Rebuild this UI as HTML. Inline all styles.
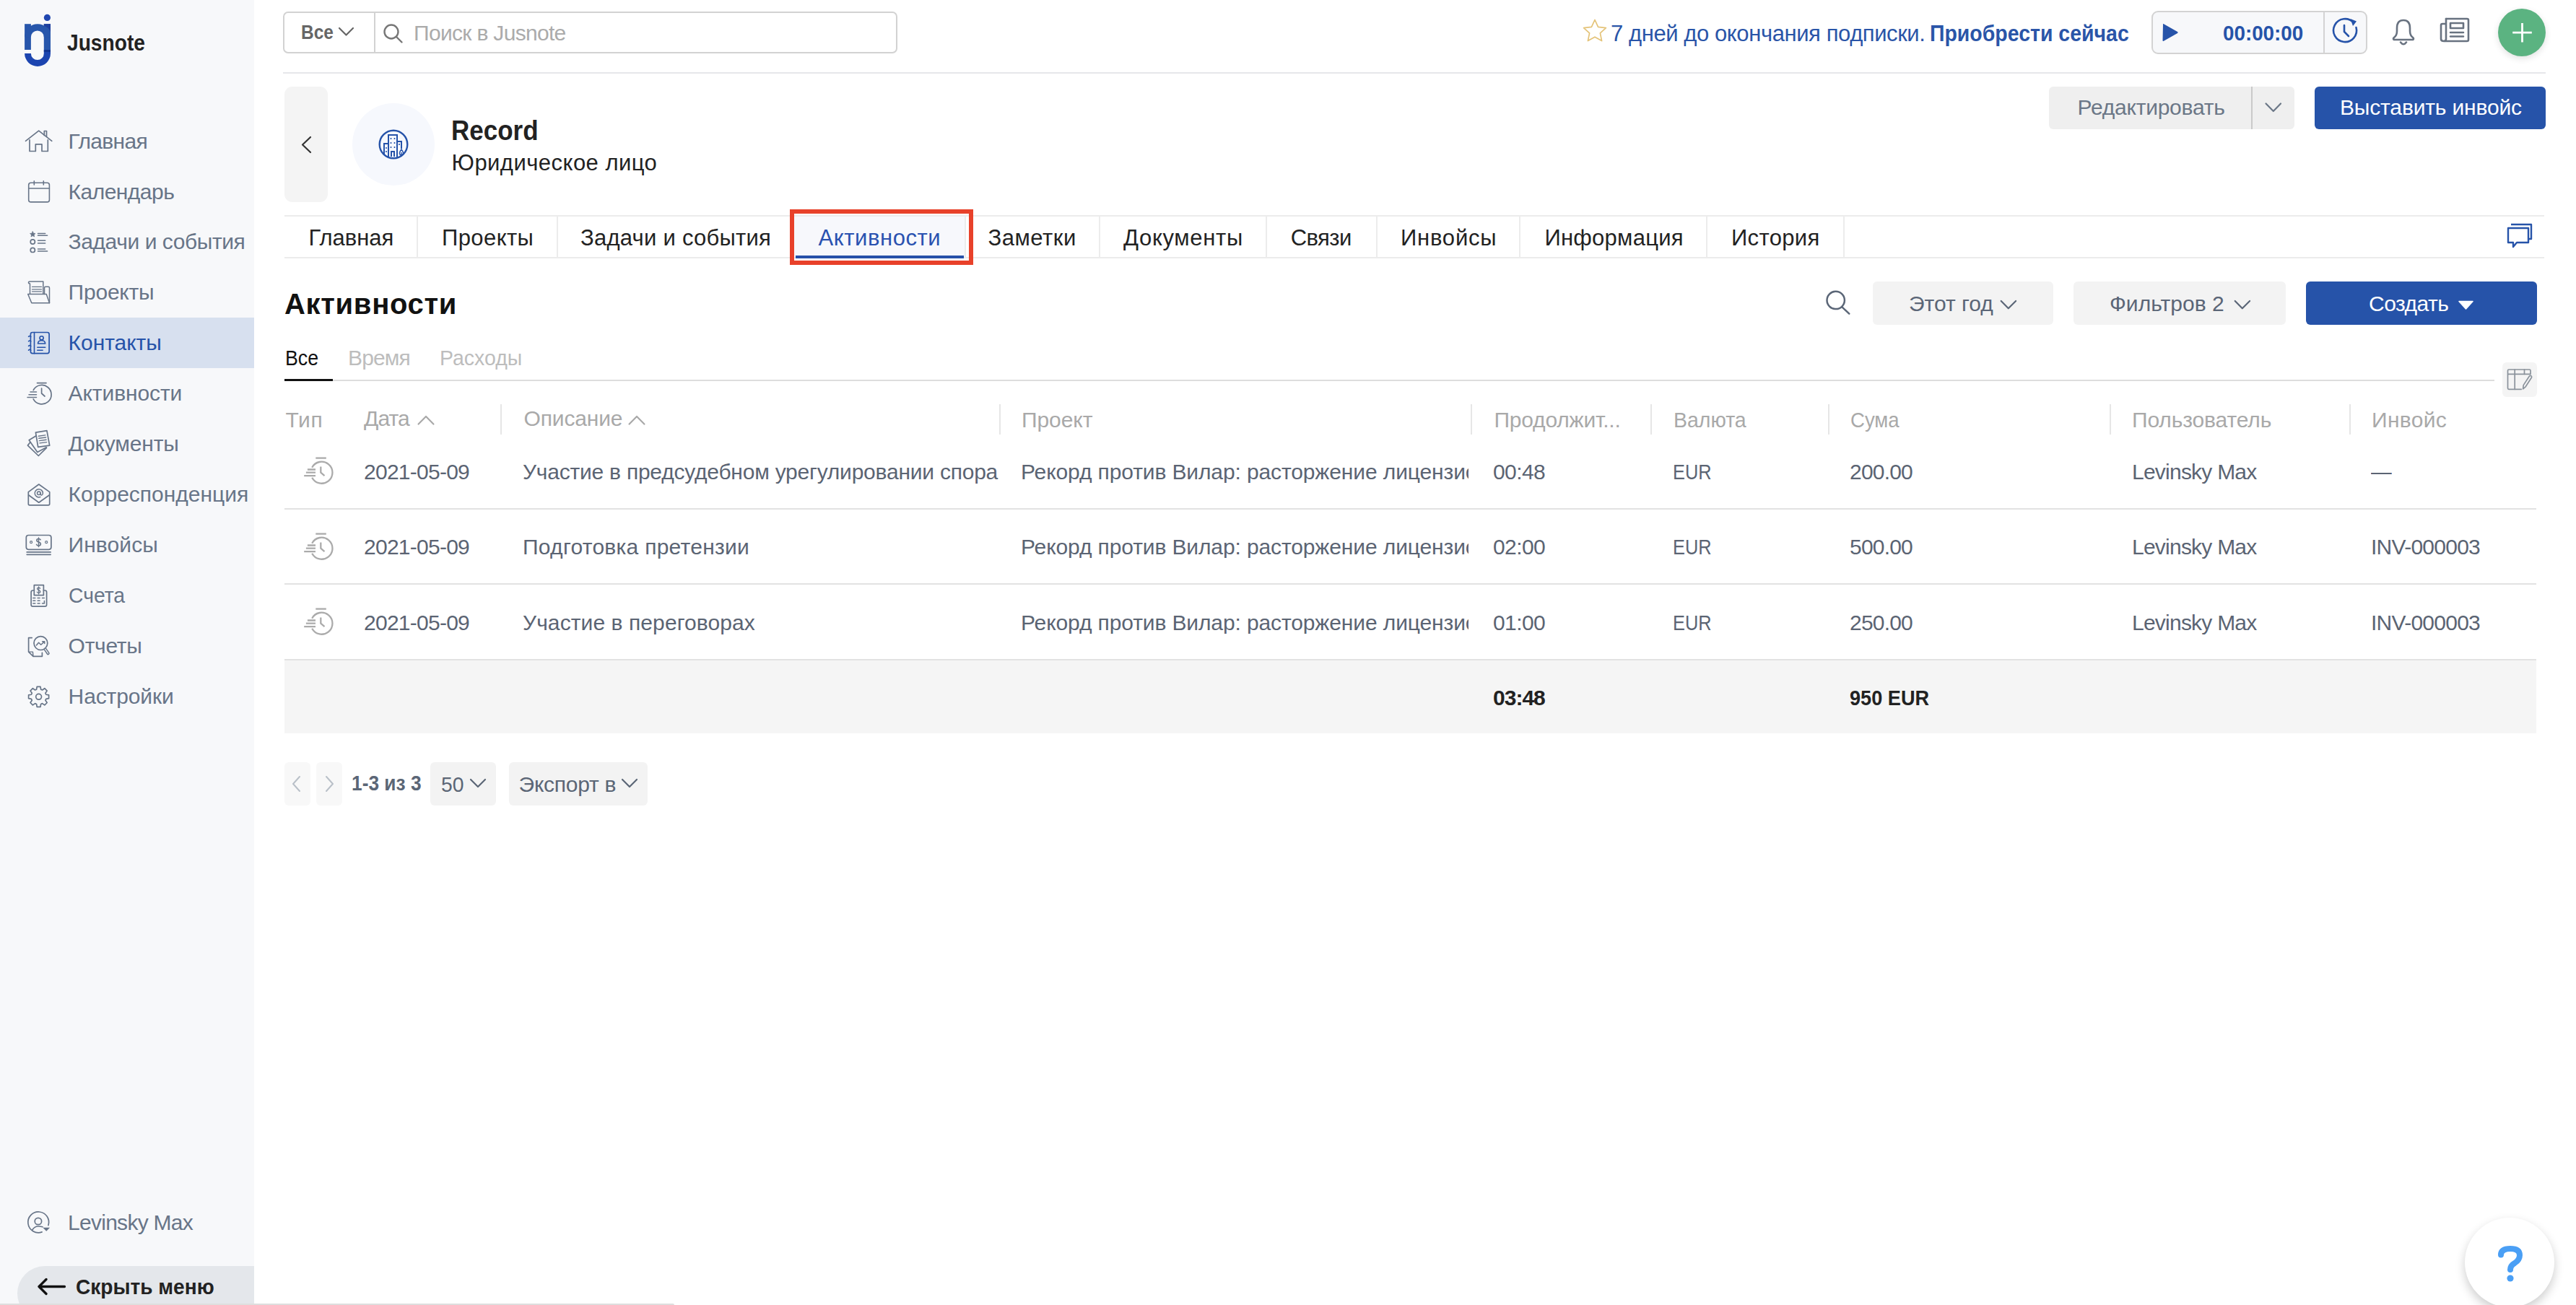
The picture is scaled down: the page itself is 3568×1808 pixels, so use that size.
<!DOCTYPE html>
<html><head><meta charset="utf-8"><style>
html,body{margin:0;padding:0;}
body{width:3568px;height:1808px;position:relative;overflow:hidden;background:#fff;font-family:"Liberation Sans",sans-serif;}
.t{position:absolute;white-space:nowrap;}
</style></head><body>
<div style="position:absolute;left:0px;top:0px;width:352px;height:1808px;background:#f7f8fa;"></div>
<svg style="position:absolute;left:30px;top:16px;" width="46" height="80" viewBox="0 0 46 80" fill="none">
<defs><clipPath id="lgT"><rect x="0" y="0" width="46" height="53"/></clipPath><clipPath id="lgB"><rect x="0" y="53" width="46" height="30"/></clipPath></defs>
<g clip-path="url(#lgT)" fill="#2756ab"><path fill-rule="evenodd" d="M4.1 35.15 A17.95 17.95 0 0 1 40 35.15 V57.95 A17.95 17.95 0 0 1 4.1 57.95 Z M12.9 35.35 A8.95 8.95 0 0 1 30.8 35.35 V58.15 A8.95 8.95 0 0 1 12.9 58.15 Z"/><rect x="4.1" y="17.2" width="8.8" height="18"/><rect x="30.8" y="17.2" width="9.2" height="18"/></g>
<g clip-path="url(#lgB)" fill="#1c45b0"><path fill-rule="evenodd" d="M4.1 35.15 A17.95 17.95 0 0 1 40 35.15 V57.95 A17.95 17.95 0 0 1 4.1 57.95 Z M12.9 35.35 A8.95 8.95 0 0 1 30.8 35.35 V58.15 A8.95 8.95 0 0 1 12.9 58.15 Z"/></g>
<rect x="30.8" y="53" width="9.2" height="3" fill="#0f2f8a" opacity="0.8"/>
<path d="M30.8 17.2 H40 V28 Q37 21 30.8 20 Z" fill="#1d3f9e"/>
<rect x="2" y="53" width="12" height="5" fill="#f7f8fa"/>
<circle cx="35.4" cy="8.4" r="4.6" fill="#2047b0"/>
</svg>
<div style="position:absolute;left:0px;top:440px;width:352px;height:70px;background:#d7e0ef;"></div>
<svg style="position:absolute;left:0px;top:0px;" width="352" height="1808" viewBox="0 0 352 1808" fill="none">
<g stroke="#687588" stroke-width="1.7" fill="none" stroke-linecap="round" stroke-linejoin="round">
<path d="M35.5 195.3 L53.7 181.2 L71.8 195.3"/>
<path d="M41 193.9 V209.5 H49.3 V199.9 H58 V209.5 H66.3 V193.9"/>
<path d="M61.3 187.5 V181.5 H64.5 V188.9"/>
<rect x="39.7" y="253.2" width="28.7" height="26.7" rx="3" stroke-width="1.6"/>
<path d="M39.7 261 H68.4 M47.3 250.9 V256 M60.3 250.9 V256" stroke-width="1.6"/>
<path d="M45.3 320.8 L46.4 323.2 L49 323.5 L47 325.3 L47.6 327.9 L45.3 326.6 L43 327.9 L43.6 325.3 L41.6 323.5 L44.2 323.2 Z" fill="#687588" stroke-width="0.8"/>
<circle cx="45.3" cy="335" r="3.1"/><circle cx="45.3" cy="346.4" r="3.1"/>
<path d="M52.5 323.4 H62.7 M52.5 326.3 H65.6 M52.5 333.3 H62.7 M52.5 336.9 H62.7 M52.5 344.9 H62.7 M52.5 348.1 H65.6" stroke-width="1.5"/>
<path d="M41.5 407 V393 Q39.5 393 39.5 391.5 Q39.5 390 41.5 390 H59.8 V407" stroke-width="1.5"/>
<path d="M44.5 397.3 H57.6 M44.5 400.9 H57.6 M44.5 403.8 H57.6" stroke-width="1.3"/>
<path d="M61.5 407.5 V399 Q61.5 397.3 63 397.3 H67 Q68.5 397.3 68.5 399 V419.8" stroke-width="1.5"/>
<path d="M38.7 407.5 H64.2 L68.5 419.8 H43.8 Z" stroke-width="1.5"/>
</g>
<g stroke="#2653a9" stroke-width="1.7" fill="none" stroke-linecap="round" stroke-linejoin="round">
<rect x="42.4" y="460.5" width="25.7" height="29.1" rx="2.5" stroke-width="1.7"/>
<path d="M47.5 460.5 V489.6" stroke-width="1.6"/>
<path d="M39.5 466.4 Q41 464.5 42.8 466.4 M39.5 472.9 Q41 471 42.8 472.9 M39.5 479.5 Q41 477.6 42.8 479.5 M39.5 485.3 Q41 483.4 42.8 485.3" stroke-width="1.5"/>
<circle cx="57.6" cy="468.3" r="2.6" stroke-width="1.6"/>
<path d="M52.5 476 Q52.8 471.8 57.6 471.8 Q62.4 471.8 62.7 476 Z" stroke-width="1.6"/>
<path d="M51.8 481.3 H62.7 M51.8 485.3 H59.1" stroke-width="1.6"/>
</g>
<g stroke="#687588" stroke-width="1.7" fill="none" stroke-linecap="round" stroke-linejoin="round">
<path d="M46.2 540.6 A13.2 13.2 0 1 1 46.2 552.8"/>
<path d="M57.6 538 V545 L62 549"/>
<path d="M51.5 530.6 H64"/>
<path d="M42 543 H50.5 M40 546.7 H50.5 M38 550.6 H50.5" stroke-width="1.5"/>
</g>
<g stroke="#687588" stroke-width="1.7" fill="none" stroke-linecap="round" stroke-linejoin="round">
<path d="M49.4 599.2 L64.9 596.7 L68.7 617.1 L52.7 619.3 Z"/>
<path d="M53.3 604.2 L62.9 602.9 M53.8 607.3 L63.6 606 M54.4 610.6 L64.1 609.3 M55 613.9 L64.7 612.6" stroke-width="1.4"/>
<path d="M49.7 604 L40.2 609.7 L51.8 626.4 L64.2 619.8"/>
<path d="M41.8 612.8 L38.4 617.1 L53.3 631.5 L64.5 620.3"/>
</g>
<g stroke="#687588" stroke-width="1.7" fill="none" stroke-linecap="round" stroke-linejoin="round">
<path d="M39.3 681.6 L53.8 671 L68.7 681.6 V698 Q68.7 699.8 67 699.8 H41 Q39.3 699.8 39.3 698 Z"/>
<path d="M39.8 686 L53.8 696.2 L68.2 686"/>
<circle cx="53.8" cy="683.3" r="2.3" stroke-width="1.5"/>
<path d="M56.1 683.3 V684.6 Q56.3 686.2 57.8 685.9 Q59.4 685.5 59.4 683.3 A5.6 5.6 0 1 0 55.8 688.5" stroke-width="1.5"/>
</g>
<g stroke="#687588" stroke-width="1.7" fill="none" stroke-linecap="round" stroke-linejoin="round">
<rect x="36.3" y="741.5" width="34.6" height="19.8" rx="3.2"/>
<path d="M37.2 764.9 H70.1 M37.2 768.3 H70.1"/>
<circle cx="43.1" cy="751.2" r="1.5" stroke-width="1.2"/><circle cx="64.2" cy="751.2" r="1.5" stroke-width="1.2"/>
<path d="M56.2 747.8 Q55.4 746.4 53.5 746.4 Q50.8 746.4 50.8 748.5 Q50.8 750.4 53.5 751 Q56.4 751.6 56.4 753.8 Q56.4 756 53.5 756 Q51.3 756 50.5 754.4 M53.5 745 V757.5" stroke-width="1.5"/>
</g>
<g stroke="#687588" stroke-width="1.7" fill="none" stroke-linecap="round" stroke-linejoin="round">
<path d="M47.3 818 H45.5 Q43.1 818 43.1 820.4 V837.8 Q43.1 840.2 45.5 840.2 H62.2 Q64.6 840.2 64.6 837.8 V820.4 Q64.6 818 62.2 818 H60.4"/>
<rect x="47.3" y="810.7" width="13.1" height="13.9"/>
<path d="M55.6 815.2 Q55 814.2 53.6 814.2 Q51.6 814.2 51.6 815.8 Q51.6 817.2 53.6 817.7 Q55.8 818.2 55.8 819.8 Q55.8 821.4 53.6 821.4 Q52 821.4 51.4 820.2 M53.6 813 V822.9" stroke-width="1.3"/>
<path d="M45.8 828.4 H48.8 M52.1 828.4 H55.1 M58.5 828.4 H61.4 M45.8 832.2 H48.8 M52.1 832.2 H55.1 M45.8 836 H48.8 M52.1 836 H55.1 M58.5 836 H61.4 V832.6" stroke-width="1.5"/>
</g>
<g stroke="#687588" stroke-width="1.7" fill="none" stroke-linecap="round" stroke-linejoin="round">
<path d="M44.2 883.6 H39.6 V903.1 L46 909.3 H58.4 V904.4"/>
<path d="M39.6 903.1 H45.4 L46 909.3" stroke-width="1.4"/>
<circle cx="56.4" cy="891.1" r="9.4"/>
<path d="M62.6 899.4 L66.6 905.2" stroke-width="4.2"/>
<path d="M62.6 899.4 L66.6 905.2" stroke="#f7f8fa" stroke-width="1.2"/>
<path d="M50.4 894 L53.6 890.2 L56.7 893.3 L61.6 888.9 M58.6 888.7 H61.7 V891.5" stroke-width="1.5"/>
</g>
<g stroke="#687588" stroke-width="1.7" fill="none" stroke-linecap="round" stroke-linejoin="round">
<path d="M50.57 955.14 L51.20 951.30 L56.00 951.30 L56.63 955.14 L58.64 955.97 L61.80 953.71 L65.19 957.10 L62.93 960.26 L63.76 962.27 L67.60 962.90 L67.60 967.70 L63.76 968.33 L62.93 970.34 L65.19 973.50 L61.80 976.89 L58.64 974.63 L56.63 975.46 L56.00 979.30 L51.20 979.30 L50.57 975.46 L48.56 974.63 L45.40 976.89 L42.01 973.50 L44.27 970.34 L43.44 968.33 L39.60 967.70 L39.60 962.90 L43.44 962.27 L44.27 960.26 L42.01 957.10 L45.40 953.71 L48.56 955.97 Z"/>
<circle cx="53.6" cy="965.3" r="3.9"/>
</g>
<g stroke="#687588" stroke-width="1.7" fill="none" stroke-linecap="round" stroke-linejoin="round" stroke-width="1.7">
<path d="M66.97 1697.6 A14.4 14.4 0 1 0 58.1 1706.9"/>
<circle cx="52.9" cy="1692" r="4.7"/>
<path d="M44.6 1704.4 Q47.5 1699 53 1699 Q56.5 1699 59 1699.8"/>
</g>
<path d="M59.3 1700.7 H69.1 L64.2 1705.8 Z" fill="#687588"/>
</svg>
<div style="position:absolute;left:24px;top:1754px;width:328px;height:76px;background:#e4e7eb;border-radius:38px 0 0 38px;"></div>
<svg style="position:absolute;left:40px;top:1760px;" width="60" height="40" viewBox="40 1760 60 40" fill="none"><path d="M54 1782.5 H89.5 M64 1772.5 L54 1782.5 L64 1792.5" stroke="#111" stroke-width="3.3" fill="none" stroke-linecap="round" stroke-linejoin="round"/></svg>
<div style="position:absolute;left:0px;top:1806px;width:934px;height:2px;background:#dedede;border-radius:0 2px 0 0;"></div>
<div style="position:absolute;left:392px;top:16px;width:851px;height:58px;box-sizing:border-box;border:2px solid #d2d2d2;border-radius:7px;"></div>
<div style="position:absolute;left:518px;top:18px;width:2px;height:54px;background:#d2d2d2;"></div>
<svg style="position:absolute;left:466px;top:34px;" width="28" height="20" viewBox="0 0 28 20" fill="none"><path d="M4 5 L13.5 14.5 L23 5" stroke="#666" stroke-width="2.2" fill="none" stroke-linecap="round" stroke-linejoin="round"/></svg>
<svg style="position:absolute;left:528px;top:30px;" width="34" height="32" viewBox="0 0 34 32" fill="none"><g stroke="#777" stroke-width="2.4" fill="none" stroke-linecap="round"><circle cx="14" cy="14" r="9.5"/><path d="M21 21 L28.5 28.5"/></g></svg>
<div style="position:absolute;left:392px;top:100px;width:3134px;height:2px;background:#e6e7ea;"></div>
<svg style="position:absolute;left:2190px;top:24px;" width="38" height="38" viewBox="0 0 38 38" fill="none"><path d="M19 3.5 L23.6 13.4 L34.4 14.6 L26.4 21.9 L28.6 32.6 L19 27.2 L9.4 32.6 L11.6 21.9 L3.6 14.6 L14.4 13.4 Z" stroke="#e4c378" stroke-width="1.7" fill="none" stroke-linejoin="round"/></svg>
<div style="position:absolute;left:2980px;top:15px;width:299px;height:60px;box-sizing:border-box;border:2px solid #d3d3d3;border-radius:9px;background:#f7f8fa;"></div>
<div style="position:absolute;left:3218px;top:17px;width:2px;height:56px;background:#d3d3d3;"></div>
<svg style="position:absolute;left:2992px;top:30px;" width="28" height="30" viewBox="0 0 28 30" fill="none"><path d="M4 4 Q3.5 2.5 5 3.2 L24 14 Q25.5 15 24 16 L5 26.8 Q3.5 27.5 3.5 26 Z" fill="#2653a9"/></svg>
<svg style="position:absolute;left:3228px;top:22px;" width="42" height="42" viewBox="0 0 42 42" fill="none"><g stroke="#2653a9" stroke-width="2.6" fill="none" stroke-linecap="round"><path d="M32 9.5 A16 16 0 1 0 35.5 16"/><path d="M19 13 V22 L25 28"/></g><path d="M27.5 4 L36 7.5 L31 14 Z" fill="#2653a9"/></svg>
<svg style="position:absolute;left:3306px;top:22px;" width="46" height="46" viewBox="0 0 46 46" fill="none"><g stroke="#687280" stroke-width="2.6" fill="none" stroke-linecap="round" stroke-linejoin="round"><path d="M10 30 Q14 27 14 21 V17 Q14 6 23 6 Q32 6 32 17 V21 Q32 27 36 30 Q38 32 36 33 H10 Q8 32 10 30 Z"/><path d="M19 36.5 Q23 42 27 36.5"/></g></svg>
<svg style="position:absolute;left:3374px;top:20px;" width="50" height="44" viewBox="0 0 50 44" fill="none"><g stroke="#687280" stroke-width="2.6" fill="none" stroke-linejoin="round" stroke-linecap="round"><path d="M14 6 H43 Q45 6 45 8 V35 Q45 37 43 37 H12"/><path d="M14 6 V34 Q14 37 11 37 Q7 37 7 34 V15 Q7 13 9 13 H14"/><rect x="20" y="12" width="18" height="7"/><path d="M20 25 H38 M20 30.5 H38"/></g></svg>
<div style="position:absolute;left:3460px;top:12px;width:66px;height:66px;border-radius:50%;background:#5bb381;box-shadow:0 3px 10px rgba(0,0,0,0.12);"></div>
<svg style="position:absolute;left:3476px;top:28px;" width="34" height="34" viewBox="0 0 34 34" fill="none"><path d="M17.5 4 V30.5 M4.2 17.2 H30.8" stroke="#fff" stroke-width="2.8" stroke-linecap="butt"/></svg>
<div style="position:absolute;left:394px;top:120px;width:60px;height:160px;background:#f4f4f4;border-radius:11px;"></div>
<svg style="position:absolute;left:412px;top:186px;" width="24" height="30" viewBox="0 0 24 30" fill="none"><path d="M18 4 L7 14.5 L18 25" stroke="#333" stroke-width="2.2" fill="none" stroke-linecap="round" stroke-linejoin="round"/></svg>
<div style="position:absolute;left:488px;top:143px;width:114px;height:114px;border-radius:50%;background:#f6f8fd;"></div>
<svg style="position:absolute;left:522px;top:177px;" width="46" height="46" viewBox="0 0 46 46" fill="none"><g stroke="#2653a9" stroke-width="2" fill="none"><circle cx="23" cy="23" r="19.3" stroke-width="2.4"/><path d="M16 41 V10 H28 V41"/><path d="M16 22 H10 V38"/><path d="M28 19 H34 V29"/><path d="M20 40 V33 H24 V40"/><path d="M19.5 14 V16 M24.5 14 V16 M19.5 20 V22 M24.5 20 V22 M19.5 26 V28 M24.5 26 V28 M13 27 V29 M13 32 V34 M31 22 V24" stroke-width="1.6"/><path d="M34 40 V34 M34 30 Q37 34 36.5 36 Q36 38 34 38 Q32 38 31.5 36 Q31 34 34 30 Z" stroke-width="1.4"/></g></svg>
<div style="position:absolute;left:2838px;top:120px;width:340px;height:59px;background:#efefef;border-radius:6px;"></div>
<div style="position:absolute;left:3118px;top:120px;width:2px;height:59px;background:#c9c9c9;"></div>
<svg style="position:absolute;left:3134px;top:138px;" width="30" height="22" viewBox="0 0 30 22" fill="none"><path d="M4.5 5.5 L14.8 16 L25 5.5" stroke="#6b7787" stroke-width="2.2" fill="none" stroke-linecap="round" stroke-linejoin="round"/></svg>
<div style="position:absolute;left:3206px;top:120px;width:320px;height:59px;background:#2653a9;border-radius:6px;"></div>
<div style="position:absolute;left:394px;top:298px;width:3130px;height:2px;background:#ececec;"></div>
<div style="position:absolute;left:394px;top:356px;width:3130px;height:2px;background:#ececec;"></div>
<div style="position:absolute;left:1100px;top:300px;width:237px;height:56px;background:#f7f8fc;"></div>
<div style="position:absolute;left:577px;top:300px;width:2px;height:56px;background:#ececec;"></div>
<div style="position:absolute;left:771px;top:300px;width:2px;height:56px;background:#ececec;"></div>
<div style="position:absolute;left:1097px;top:300px;width:2px;height:56px;background:#ececec;"></div>
<div style="position:absolute;left:1336px;top:300px;width:2px;height:56px;background:#ececec;"></div>
<div style="position:absolute;left:1522px;top:300px;width:2px;height:56px;background:#ececec;"></div>
<div style="position:absolute;left:1753px;top:300px;width:2px;height:56px;background:#ececec;"></div>
<div style="position:absolute;left:1905.5px;top:300px;width:2.0px;height:56px;background:#ececec;"></div>
<div style="position:absolute;left:2103.5px;top:300px;width:2.0px;height:56px;background:#ececec;"></div>
<div style="position:absolute;left:2362.7px;top:300px;width:2.0px;height:56px;background:#ececec;"></div>
<div style="position:absolute;left:2553px;top:300px;width:2px;height:56px;background:#ececec;"></div>
<div style="position:absolute;left:1102px;top:354px;width:233px;height:4px;background:#2650a8;"></div>
<div style="position:absolute;left:1094px;top:290px;width:254px;height:77px;box-sizing:border-box;border:6px solid #e8412a;"></div>
<svg style="position:absolute;left:3468px;top:306px;" width="44" height="42" viewBox="0 0 44 42" fill="none"><g stroke="#2653a9" stroke-width="2.4" fill="none" stroke-linejoin="round"><path d="M10 5 H38 V25 H35"/><path d="M6 10 H34 V30 H18 L13 36 V30 H6 Z"/></g></svg>
<svg style="position:absolute;left:2500px;top:380px;" width="80" height="80" viewBox="2500 380 80 80" fill="none"><g stroke="#5b6677" stroke-width="2.5" fill="none" stroke-linecap="round"><circle cx="2542.7" cy="415.9" r="12.2"/><path d="M2551.4 425.3 L2561.3 434.6"/></g></svg>
<div style="position:absolute;left:2594px;top:390px;width:250px;height:60px;background:#f3f3f3;border-radius:6px;"></div>
<svg style="position:absolute;left:2766px;top:412px;" width="32" height="22" viewBox="0 0 32 22" fill="none"><path d="M5.7 5 L15.8 15.3 L26.1 5" stroke="#5b6677" stroke-width="2.2" fill="none" stroke-linecap="round" stroke-linejoin="round"/></svg>
<div style="position:absolute;left:2872px;top:390px;width:294px;height:60px;background:#f3f3f3;border-radius:6px;"></div>
<svg style="position:absolute;left:3090px;top:412px;" width="32" height="22" viewBox="0 0 32 22" fill="none"><path d="M5.7 5 L15.8 15.3 L26.1 5" stroke="#5b6677" stroke-width="2.2" fill="none" stroke-linecap="round" stroke-linejoin="round"/></svg>
<div style="position:absolute;left:3194px;top:390px;width:320px;height:60px;background:#2653a9;border-radius:6px;"></div>
<svg style="position:absolute;left:3400px;top:412px;" width="32" height="22" viewBox="0 0 32 22" fill="none"><path d="M6 5.5 H25 L15.5 16 Z" fill="#fff" stroke="#fff" stroke-width="1.6" stroke-linejoin="round"/></svg>
<div style="position:absolute;left:394px;top:526px;width:3061px;height:2px;background:#dddddd;"></div>
<div style="position:absolute;left:394px;top:525px;width:67px;height:3px;background:#111;"></div>
<div style="position:absolute;left:3466px;top:502px;width:48px;height:48px;background:#f4f4f4;border-radius:6px;"></div>
<svg style="position:absolute;left:3460px;top:500px;" width="60" height="56" viewBox="3460 500 60 56" fill="none"><g stroke="#8a929b" stroke-width="1.7" fill="none" stroke-linejoin="round" stroke-linecap="round"><path d="M3492.3 539.3 H3475 Q3473.5 539.3 3473.5 537.8 V513.5 Q3473.5 512 3475 512 H3503.5 Q3505 512 3505 513.5 V518.3 H3473.5"/><path d="M3483.2 512 V539.3 M3496.5 512 V518.3"/><path d="M3494.6 538.8 L3495.2 533.6 L3503.3 521.3 Q3504.5 519.8 3506 520.8 Q3507.2 521.8 3506.3 523.3 L3498.2 535.8 Z"/></g></svg>
<svg style="position:absolute;left:576px;top:572px;" width="30" height="20" viewBox="0 0 30 20" fill="none"><path d="M3.6 15.6 L14 5 L24.4 15.6" stroke="#a9a9a9" stroke-width="2.2" fill="none" stroke-linecap="round" stroke-linejoin="round"/></svg>
<svg style="position:absolute;left:868px;top:572px;" width="30" height="20" viewBox="0 0 30 20" fill="none"><path d="M3.6 15.6 L14 5 L24.4 15.6" stroke="#a9a9a9" stroke-width="2.2" fill="none" stroke-linecap="round" stroke-linejoin="round"/></svg>
<div style="position:absolute;left:693px;top:560px;width:2px;height:42px;background:#e6e6e6;"></div>
<div style="position:absolute;left:1383.5px;top:560px;width:2.0px;height:42px;background:#e6e6e6;"></div>
<div style="position:absolute;left:2037px;top:560px;width:2px;height:42px;background:#e6e6e6;"></div>
<div style="position:absolute;left:2286px;top:560px;width:2px;height:42px;background:#e6e6e6;"></div>
<div style="position:absolute;left:2531.5px;top:560px;width:2.0px;height:42px;background:#e6e6e6;"></div>
<div style="position:absolute;left:2921.5px;top:560px;width:2.0px;height:42px;background:#e6e6e6;"></div>
<div style="position:absolute;left:3253.5px;top:560px;width:2.0px;height:42px;background:#e6e6e6;"></div>
<svg style="position:absolute;left:420px;top:630px;" width="44" height="44" viewBox="0 0 44 44" fill="none"><g stroke="#ababab" stroke-width="2.3" fill="none" stroke-linecap="butt" stroke-linejoin="round"><path d="M12.2 17.7 A15 15 0 1 1 12.2 31.7"/><path d="M24.3 16.6 V24.7 L29.5 29.2"/><path d="M17.3 4.6 H31.8"/><path d="M5.9 20.5 H17 M3.9 24.7 H17 M1.2 29.2 H17"/></g></svg>
<svg style="position:absolute;left:420px;top:734.5px;" width="44" height="44" viewBox="0 0 44 44" fill="none"><g stroke="#ababab" stroke-width="2.3" fill="none" stroke-linecap="butt" stroke-linejoin="round"><path d="M12.2 17.7 A15 15 0 1 1 12.2 31.7"/><path d="M24.3 16.6 V24.7 L29.5 29.2"/><path d="M17.3 4.6 H31.8"/><path d="M5.9 20.5 H17 M3.9 24.7 H17 M1.2 29.2 H17"/></g></svg>
<svg style="position:absolute;left:420px;top:839px;" width="44" height="44" viewBox="0 0 44 44" fill="none"><g stroke="#ababab" stroke-width="2.3" fill="none" stroke-linecap="butt" stroke-linejoin="round"><path d="M12.2 17.7 A15 15 0 1 1 12.2 31.7"/><path d="M24.3 16.6 V24.7 L29.5 29.2"/><path d="M17.3 4.6 H31.8"/><path d="M5.9 20.5 H17 M3.9 24.7 H17 M1.2 29.2 H17"/></g></svg>
<div style="position:absolute;left:394px;top:703.5px;width:3119px;height:2.0px;background:#e2e2e2;"></div>
<div style="position:absolute;left:394px;top:808px;width:3119px;height:2px;background:#e2e2e2;"></div>
<div style="position:absolute;left:394px;top:912.5px;width:3119px;height:2.0px;background:#e2e2e2;"></div>
<div style="position:absolute;left:394px;top:914.5px;width:3119px;height:101.5px;background:#f5f5f5;"></div>
<div style="position:absolute;left:394px;top:1056px;width:36px;height:60px;background:#f8f8f8;border-radius:6px;"></div>
<div style="position:absolute;left:438px;top:1056px;width:36px;height:60px;background:#f8f8f8;border-radius:6px;"></div>
<svg style="position:absolute;left:400px;top:1072px;" width="24" height="28" viewBox="0 0 24 28" fill="none"><path d="M15 4 L6 14 L15 24" stroke="#b9c0c8" stroke-width="2" fill="none" stroke-linecap="round" stroke-linejoin="round"/></svg>
<svg style="position:absolute;left:444px;top:1072px;" width="24" height="28" viewBox="0 0 24 28" fill="none"><path d="M8 4 L17 14 L8 24" stroke="#b9c0c8" stroke-width="2" fill="none" stroke-linecap="round" stroke-linejoin="round"/></svg>
<div style="position:absolute;left:596px;top:1056px;width:91px;height:60px;background:#f3f3f3;border-radius:6px;"></div>
<svg style="position:absolute;left:647px;top:1076px;" width="30" height="20" viewBox="0 0 30 20" fill="none"><path d="M5 4 L15 14 L25 4" stroke="#5b6676" stroke-width="2.2" fill="none" stroke-linecap="round" stroke-linejoin="round"/></svg>
<div style="position:absolute;left:705px;top:1056px;width:192px;height:60px;background:#f3f3f3;border-radius:6px;"></div>
<svg style="position:absolute;left:857px;top:1076px;" width="30" height="20" viewBox="0 0 30 20" fill="none"><path d="M5 4 L15 14 L25 4" stroke="#5b6676" stroke-width="2.2" fill="none" stroke-linecap="round" stroke-linejoin="round"/></svg>
<div style="position:absolute;left:3414px;top:1687px;width:124px;height:124px;border-radius:50%;background:#fff;box-shadow:0 6px 14px rgba(0,0,0,0.2);"></div>
<svg style="position:absolute;left:3450px;top:1720px;" width="54" height="62" viewBox="0 0 54 62" fill="none"><path d="M14 18.5 Q14 10 27 10 Q40 10 40 19 Q40 25.5 33 30 Q27 33.5 27 39" stroke="#4a9ff5" stroke-width="8" fill="none" stroke-linecap="round" stroke-linejoin="round"/><circle cx="27" cy="51" r="4.6" fill="#4a9ff5"/></svg>
<span id="t0" class="t" style="left:92.7px;top:43.8px;font-size:31px;line-height:31px;color:#222;font-weight:700;letter-spacing:0px;transform:scaleX(0.9086);transform-origin:0 0;">Jusnote</span>
<span id="t1" class="t" style="left:94.6px;top:180.6px;font-size:30px;line-height:30px;color:#687588;font-weight:400;letter-spacing:-0.665px;">Главная</span>
<span id="t2" class="t" style="left:94.6px;top:250.5px;font-size:30px;line-height:30px;color:#687588;font-weight:400;letter-spacing:-0.528px;">Календарь</span>
<span id="t3" class="t" style="left:94.6px;top:320.4px;font-size:30px;line-height:30px;color:#687588;font-weight:400;letter-spacing:-0.431px;">Задачи и события</span>
<span id="t4" class="t" style="left:94.6px;top:390.3px;font-size:30px;line-height:30px;color:#687588;font-weight:400;letter-spacing:-0.215px;">Проекты</span>
<span id="t5" class="t" style="left:94.6px;top:460.2px;font-size:30px;line-height:30px;color:#2653a9;font-weight:400;letter-spacing:-0.056px;">Контакты</span>
<span id="t6" class="t" style="left:94.6px;top:530.1px;font-size:30px;line-height:30px;color:#687588;font-weight:400;letter-spacing:-0.097px;">Активности</span>
<span id="t7" class="t" style="left:94.6px;top:600.0px;font-size:30px;line-height:30px;color:#687588;font-weight:400;letter-spacing:-0.182px;">Документы</span>
<span id="t8" class="t" style="left:94.6px;top:669.9px;font-size:30px;line-height:30px;color:#687588;font-weight:400;letter-spacing:0.003px;">Корреспонденция</span>
<span id="t9" class="t" style="left:94.6px;top:739.8px;font-size:30px;line-height:30px;color:#687588;font-weight:400;letter-spacing:0.075px;">Инвойсы</span>
<span id="t10" class="t" style="left:94.6px;top:809.7px;font-size:30px;line-height:30px;color:#687588;font-weight:400;letter-spacing:0px;transform:scaleX(0.9440);transform-origin:0 0;">Счета</span>
<span id="t11" class="t" style="left:94.6px;top:879.6px;font-size:30px;line-height:30px;color:#687588;font-weight:400;letter-spacing:-0.301px;">Отчеты</span>
<span id="t12" class="t" style="left:94.6px;top:949.5px;font-size:30px;line-height:30px;color:#687588;font-weight:400;letter-spacing:-0.114px;">Настройки</span>
<span id="t13" class="t" style="left:94.0px;top:1678.6px;font-size:30px;line-height:30px;color:#687588;font-weight:400;letter-spacing:-0.721px;">Levinsky Max</span>
<span id="t14" class="t" style="left:104.8px;top:1768.2px;font-size:30px;line-height:30px;color:#222;font-weight:700;letter-spacing:0px;transform:scaleX(0.9363);transform-origin:0 0;">Скрыть меню</span>
<span id="t15" class="t" style="left:417.0px;top:30.5px;font-size:28px;line-height:28px;color:#666;font-weight:700;letter-spacing:0px;transform:scaleX(0.8733);transform-origin:0 0;">Все</span>
<span id="t16" class="t" style="left:573.0px;top:30.6px;font-size:30px;line-height:30px;color:#ababab;font-weight:400;letter-spacing:-0.679px;">Поиск в Jusnote</span>
<span id="t17" class="t" style="left:2231.0px;top:30.5px;font-size:31px;line-height:31px;color:#2a55a8;font-weight:400;letter-spacing:-0.414px;">7 дней до окончания подписки.</span>
<span id="t18" class="t" style="left:2673.0px;top:30.5px;font-size:31px;line-height:31px;color:#2a55a8;font-weight:700;letter-spacing:0px;transform:scaleX(0.9183);transform-origin:0 0;">Приобрести сейчас</span>
<span id="t19" class="t" style="left:3079.0px;top:30.8px;font-size:30px;line-height:30px;color:#2653a9;font-weight:700;letter-spacing:0px;transform:scaleX(0.9257);transform-origin:0 0;">00:00:00</span>
<span id="t20" class="t" style="left:625.0px;top:161.5px;font-size:38px;line-height:38px;color:#222;font-weight:700;letter-spacing:0px;transform:scaleX(0.9212);transform-origin:0 0;">Record</span>
<span id="t21" class="t" style="left:625.6px;top:210.0px;font-size:31px;line-height:31px;color:#222;font-weight:400;letter-spacing:0.468px;">Юридическое лицо</span>
<span id="t22" class="t" style="left:2877.5px;top:134.1px;font-size:30px;line-height:30px;color:#6b7787;font-weight:400;letter-spacing:-0.245px;">Редактировать</span>
<span id="t23" class="t" style="left:3241.0px;top:134.1px;font-size:30px;line-height:30px;color:#fff;font-weight:400;letter-spacing:-0.156px;">Выставить инвойс</span>
<span id="t24" class="t" style="left:427.5px;top:314.3px;font-size:31px;line-height:31px;color:#222;font-weight:400;letter-spacing:-0.023px;">Главная</span>
<span id="t25" class="t" style="left:612.0px;top:314.3px;font-size:31px;line-height:31px;color:#222;font-weight:400;letter-spacing:0.409px;">Проекты</span>
<span id="t26" class="t" style="left:804.0px;top:314.3px;font-size:31px;line-height:31px;color:#222;font-weight:400;letter-spacing:0.253px;">Задачи и события</span>
<span id="t27" class="t" style="left:1133.5px;top:314.3px;font-size:31px;line-height:31px;color:#2a52b0;font-weight:400;letter-spacing:0.579px;">Активности</span>
<span id="t28" class="t" style="left:1368.4px;top:314.3px;font-size:31px;line-height:31px;color:#222;font-weight:400;letter-spacing:0.547px;">Заметки</span>
<span id="t29" class="t" style="left:1556.0px;top:314.3px;font-size:31px;line-height:31px;color:#222;font-weight:400;letter-spacing:0.681px;">Документы</span>
<span id="t30" class="t" style="left:1787.7px;top:314.3px;font-size:31px;line-height:31px;color:#222;font-weight:400;letter-spacing:-0.567px;">Связи</span>
<span id="t31" class="t" style="left:1940.0px;top:314.3px;font-size:31px;line-height:31px;color:#222;font-weight:400;letter-spacing:0.781px;">Инвойсы</span>
<span id="t32" class="t" style="left:2139.4px;top:314.3px;font-size:31px;line-height:31px;color:#222;font-weight:400;letter-spacing:0.261px;">Информация</span>
<span id="t33" class="t" style="left:2398.0px;top:314.3px;font-size:31px;line-height:31px;color:#222;font-weight:400;letter-spacing:0.340px;">История</span>
<span id="t34" class="t" style="left:394.0px;top:401.1px;font-size:40px;line-height:40px;color:#111;font-weight:700;letter-spacing:0.692px;">Активности</span>
<span id="t35" class="t" style="left:2644.0px;top:405.8px;font-size:30px;line-height:30px;color:#5b6677;font-weight:400;letter-spacing:-0.013px;">Этот год</span>
<span id="t36" class="t" style="left:2922.0px;top:405.8px;font-size:30px;line-height:30px;color:#5b6677;font-weight:400;letter-spacing:0.040px;">Фильтров 2</span>
<span id="t37" class="t" style="left:3281.0px;top:405.8px;font-size:30px;line-height:30px;color:#fff;font-weight:400;letter-spacing:-0.536px;">Создать</span>
<span id="t38" class="t" style="left:395.0px;top:481.4px;font-size:30px;line-height:30px;color:#111;font-weight:400;letter-spacing:0px;transform:scaleX(0.8917);transform-origin:0 0;">Все</span>
<span id="t39" class="t" style="left:482.0px;top:481.4px;font-size:30px;line-height:30px;color:#bdbdbd;font-weight:400;letter-spacing:-0.863px;">Время</span>
<span id="t40" class="t" style="left:609.0px;top:481.4px;font-size:30px;line-height:30px;color:#bdbdbd;font-weight:400;letter-spacing:0px;transform:scaleX(0.9480);transform-origin:0 0;">Расходы</span>
<span id="t41" class="t" style="left:395.4px;top:567.1px;font-size:30px;line-height:30px;color:#a9a9a9;font-weight:400;letter-spacing:0.692px;">Тип</span>
<span id="t42" class="t" style="left:504.0px;top:565.1px;font-size:30px;line-height:30px;color:#a9a9a9;font-weight:400;letter-spacing:-0.879px;">Дата</span>
<span id="t43" class="t" style="left:725.6px;top:565.1px;font-size:30px;line-height:30px;color:#a9a9a9;font-weight:400;letter-spacing:-0.164px;">Описание</span>
<span id="t44" class="t" style="left:1415.0px;top:567.1px;font-size:30px;line-height:30px;color:#a9a9a9;font-weight:400;letter-spacing:-0.066px;">Проект</span>
<span id="t45" class="t" style="left:2069.4px;top:567.1px;font-size:30px;line-height:30px;color:#a9a9a9;font-weight:400;letter-spacing:-0.197px;">Продолжит...</span>
<span id="t46" class="t" style="left:2318.0px;top:567.1px;font-size:30px;line-height:30px;color:#a9a9a9;font-weight:400;letter-spacing:0px;transform:scaleX(0.9488);transform-origin:0 0;">Валюта</span>
<span id="t47" class="t" style="left:2563.0px;top:567.1px;font-size:30px;line-height:30px;color:#a9a9a9;font-weight:400;letter-spacing:0px;transform:scaleX(0.9187);transform-origin:0 0;">Сума</span>
<span id="t48" class="t" style="left:2953.0px;top:567.1px;font-size:30px;line-height:30px;color:#a9a9a9;font-weight:400;letter-spacing:-0.117px;">Пользователь</span>
<span id="t49" class="t" style="left:3285.0px;top:567.1px;font-size:30px;line-height:30px;color:#a9a9a9;font-weight:400;letter-spacing:0.322px;">Инвойс</span>
<span id="t50" class="t" style="left:504.0px;top:638.6px;font-size:30px;line-height:30px;color:#5b6473;font-weight:400;letter-spacing:-0.741px;">2021-05-09</span>
<span id="t51" class="t" style="left:724.0px;top:638.6px;font-size:30px;line-height:30px;color:#5b6473;font-weight:400;letter-spacing:-0.227px;">Участие в предсудебном урегулировании спора</span>
<span id="t52" class="t" style="left:1414.0px;top:638.6px;font-size:30px;line-height:30px;color:#5b6473;font-weight:400;letter-spacing:-0.118px;width:620px;overflow:hidden;">Рекорд против Вилар: расторжение лицензис</span>
<span id="t53" class="t" style="left:2068.0px;top:638.6px;font-size:30px;line-height:30px;color:#5b6473;font-weight:400;letter-spacing:-0.570px;">00:48</span>
<span id="t54" class="t" style="left:2316.5px;top:638.6px;font-size:30px;line-height:30px;color:#5b6473;font-weight:400;letter-spacing:0px;transform:scaleX(0.8466);transform-origin:0 0;">EUR</span>
<span id="t55" class="t" style="left:2562.0px;top:638.6px;font-size:30px;line-height:30px;color:#5b6473;font-weight:400;letter-spacing:-0.793px;">200.00</span>
<span id="t56" class="t" style="left:2953.0px;top:638.6px;font-size:30px;line-height:30px;color:#5b6473;font-weight:400;letter-spacing:-0.767px;">Levinsky Max</span>
<span id="t57" class="t" style="left:3284.0px;top:638.6px;font-size:30px;line-height:30px;color:#5b6473;font-weight:400;letter-spacing:0px;transform:scaleX(0.9574);transform-origin:0 0;">—</span>
<span id="t58" class="t" style="left:504.0px;top:743.1px;font-size:30px;line-height:30px;color:#5b6473;font-weight:400;letter-spacing:-0.741px;">2021-05-09</span>
<span id="t59" class="t" style="left:724.0px;top:743.1px;font-size:30px;line-height:30px;color:#5b6473;font-weight:400;letter-spacing:0.264px;">Подготовка претензии</span>
<span id="t60" class="t" style="left:1414.0px;top:743.1px;font-size:30px;line-height:30px;color:#5b6473;font-weight:400;letter-spacing:-0.118px;width:620px;overflow:hidden;">Рекорд против Вилар: расторжение лицензис</span>
<span id="t61" class="t" style="left:2068.0px;top:743.1px;font-size:30px;line-height:30px;color:#5b6473;font-weight:400;letter-spacing:-0.570px;">02:00</span>
<span id="t62" class="t" style="left:2316.5px;top:743.1px;font-size:30px;line-height:30px;color:#5b6473;font-weight:400;letter-spacing:0px;transform:scaleX(0.8466);transform-origin:0 0;">EUR</span>
<span id="t63" class="t" style="left:2562.0px;top:743.1px;font-size:30px;line-height:30px;color:#5b6473;font-weight:400;letter-spacing:-0.793px;">500.00</span>
<span id="t64" class="t" style="left:2953.0px;top:743.1px;font-size:30px;line-height:30px;color:#5b6473;font-weight:400;letter-spacing:-0.767px;">Levinsky Max</span>
<span id="t65" class="t" style="left:3284.0px;top:743.1px;font-size:30px;line-height:30px;color:#5b6473;font-weight:400;letter-spacing:-0.739px;">INV-000003</span>
<span id="t66" class="t" style="left:504.0px;top:847.6px;font-size:30px;line-height:30px;color:#5b6473;font-weight:400;letter-spacing:-0.741px;">2021-05-09</span>
<span id="t67" class="t" style="left:724.0px;top:847.6px;font-size:30px;line-height:30px;color:#5b6473;font-weight:400;letter-spacing:0.085px;">Участие в переговорах</span>
<span id="t68" class="t" style="left:1414.0px;top:847.6px;font-size:30px;line-height:30px;color:#5b6473;font-weight:400;letter-spacing:-0.118px;width:620px;overflow:hidden;">Рекорд против Вилар: расторжение лицензис</span>
<span id="t69" class="t" style="left:2068.0px;top:847.6px;font-size:30px;line-height:30px;color:#5b6473;font-weight:400;letter-spacing:-0.570px;">01:00</span>
<span id="t70" class="t" style="left:2316.5px;top:847.6px;font-size:30px;line-height:30px;color:#5b6473;font-weight:400;letter-spacing:0px;transform:scaleX(0.8466);transform-origin:0 0;">EUR</span>
<span id="t71" class="t" style="left:2562.0px;top:847.6px;font-size:30px;line-height:30px;color:#5b6473;font-weight:400;letter-spacing:-0.793px;">250.00</span>
<span id="t72" class="t" style="left:2953.0px;top:847.6px;font-size:30px;line-height:30px;color:#5b6473;font-weight:400;letter-spacing:-0.767px;">Levinsky Max</span>
<span id="t73" class="t" style="left:3284.0px;top:847.6px;font-size:30px;line-height:30px;color:#5b6473;font-weight:400;letter-spacing:-0.739px;">INV-000003</span>
<span id="t74" class="t" style="left:2068.0px;top:952.3px;font-size:30px;line-height:30px;color:#222;font-weight:700;letter-spacing:-0.984px;">03:48</span>
<span id="t75" class="t" style="left:2562.0px;top:952.3px;font-size:30px;line-height:30px;color:#222;font-weight:700;letter-spacing:0px;transform:scaleX(0.9047);transform-origin:0 0;">950 EUR</span>
<span id="t76" class="t" style="left:487.0px;top:1069.6px;font-size:30px;line-height:30px;color:#5b6676;font-weight:700;letter-spacing:0px;transform:scaleX(0.8774);transform-origin:0 0;">1-3 из 3</span>
<span id="t77" class="t" style="left:610.6px;top:1071.6px;font-size:30px;line-height:30px;color:#5b6676;font-weight:400;letter-spacing:0px;transform:scaleX(0.9438);transform-origin:0 0;">50</span>
<span id="t78" class="t" style="left:718.6px;top:1071.6px;font-size:30px;line-height:30px;color:#5b6676;font-weight:400;letter-spacing:-0.262px;">Экспорт в</span>
</body></html>
